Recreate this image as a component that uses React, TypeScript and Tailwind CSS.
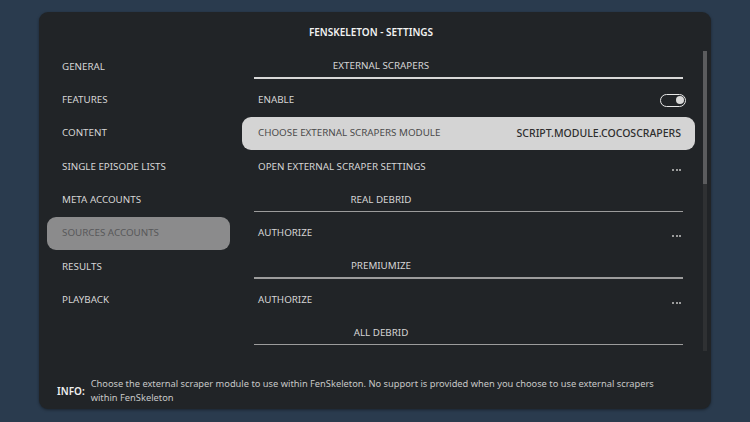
import React from "react";

const font = { fontFamily: '"Noto Sans", "Open Sans", sans-serif' };

function Header({ label, bright }: { label: string; bright?: boolean }) {
  return (
    <div className="relative h-[33.33px] flex items-center">
      <div className="w-[254px] ml-[12px] text-center text-[9.8px] text-[#d6d6d6] -mt-[1px]">{label}</div>
      <div
        className={
          "absolute left-[12px] right-[12px] bottom-[5px] h-[1.5px] " +
          (bright ? "bg-[#d8d8d8]" : "bg-[#9c9c9c]")
        }
      />
    </div>
  );
}

function Row({ label, right }: { label: string; right?: React.ReactNode }) {
  return (
    <div className="h-[33.33px] flex items-center justify-between pl-[16px] pr-[14px]">
      <span className="text-[9.8px] text-[#d6d6d6]">{label}</span>
      {right}
    </div>
  );
}

const Dots = () => (
  <div className="flex gap-[1.5px] mt-[5px]">
    <div className="w-[2px] h-[2px] rounded-full bg-[#c4c4c4]" />
    <div className="w-[2px] h-[2px] rounded-full bg-[#c4c4c4]" />
    <div className="w-[2px] h-[2px] rounded-full bg-[#c4c4c4]" />
  </div>
);

export default function App() {
  const menu = [
    "GENERAL",
    "FEATURES",
    "CONTENT",
    "SINGLE EPISODE LISTS",
    "META ACCOUNTS",
    "SOURCES ACCOUNTS",
    "RESULTS",
    "PLAYBACK",
  ];
  return (
    <div className="w-[750px] h-[422px] bg-[#2a3b4e] pt-[12px] pl-[39px]" style={font}>
      <div className="w-[672px] h-[397px] bg-[#212427] rounded-[9px] flex flex-col shadow-[0_1px_3px_rgba(0,0,0,0.4)]">
        <div className="h-[38.5px] flex items-center justify-center pt-[2px] pr-[8px]">
          <span className="text-[10px] font-semibold text-[#f2f2f2]">FENSKELETON - SETTINGS</span>
        </div>
        <div className="flex h-[300px]">
          <div className="w-[183px] ml-[8px] flex flex-col">
            {menu.map((m) => (
              <div
                key={m}
                className={
                  "h-[33.33px] flex items-center pl-[15px] rounded-[9px] text-[9.8px] " +
                  (m === "SOURCES ACCOUNTS" ? "bg-[#8b8b8c] text-[#58585a]" : "text-[#d6d6d6]")
                }
              >
                {m}
              </div>
            ))}
          </div>
          <div className="w-[453px] ml-[12px] flex flex-col">
            <Header label="EXTERNAL SCRAPERS" bright />
            <Row
              label="ENABLE"
              right={
                <div className="w-[26px] h-[13px] rounded-full border-[1.5px] border-[#e6e6e6] flex items-center justify-end pr-[1.5px] -mr-[5px]">
                  <div className="w-[8px] h-[8px] rounded-full bg-[#d9d9d9]" />
                </div>
              }
            />
            <div className="h-[33.33px] flex items-center justify-between pl-[16px] pr-[14px] bg-[#d4d4d4] rounded-[9px]">
              <span className="text-[9.8px] text-[#4a4a4a]">CHOOSE EXTERNAL SCRAPERS MODULE</span>
              <span className="text-[10.5px] font-medium text-[#2e2e2e]">SCRIPT.MODULE.COCOSCRAPERS</span>
            </div>
            <Row label="OPEN EXTERNAL SCRAPER SETTINGS" right={<Dots />} />
            <Header label="REAL DEBRID" />
            <Row label="AUTHORIZE" right={<Dots />} />
            <Header label="PREMIUMIZE" />
            <Row label="AUTHORIZE" right={<Dots />} />
            <Header label="ALL DEBRID" />
          </div>
          <div className="w-[4px] ml-[8px] h-[300px] bg-[#2f3133] flex flex-col">
            <div className="h-[133px] bg-[#5b5c5e]" />
          </div>
        </div>
        <div className="flex items-center pl-[18px] pr-[36px] mt-[26px]">
          <span className="text-[10px] font-semibold text-[#f0f0f0] mr-[6px] mt-[2px]">INFO:</span>
          <p className="text-[9.3px] leading-[14px] text-[#c8c8c8]">
            Choose the external scraper module to use within FenSkeleton. No support is provided when you choose to use external scrapers within FenSkeleton
          </p>
        </div>
      </div>
    </div>
  );
}
